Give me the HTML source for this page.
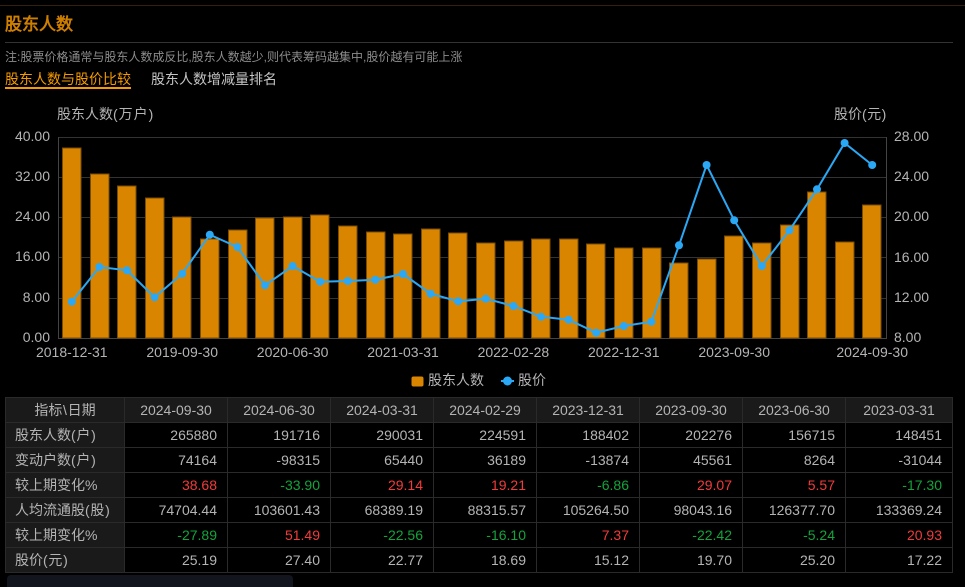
<!DOCTYPE html>
<html><head><meta charset="utf-8">
<style>
html,body{margin:0;padding:0;background:#000;}
#r{position:relative;width:965px;height:587px;overflow:hidden;background:#000;font-family:"Liberation Sans","WenQuanYi Zen Hei",sans-serif;color:#b4b4b4;}
.a{position:absolute;white-space:nowrap;}
svg{position:absolute;left:0;top:0;}
svg text{font-family:"Liberation Sans","WenQuanYi Zen Hei",sans-serif;}
table{position:absolute;left:5px;top:397px;border-collapse:collapse;table-layout:fixed;width:947px;font-size:14px;}
td{border:1px solid #2a2a2a;height:24px;padding:0 10px 0 0;text-align:right;box-sizing:border-box;color:#b4b4b4;line-height:24px;white-space:nowrap;}
tr{height:25px;}
tr:first-child td{background:#1a1a1a;text-align:center;padding:0;}
td:first-child{background:#1a1a1a;text-align:left;padding-left:9px;}
tr:first-child td:first-child{text-align:center;padding:0;}
.u{color:#f23b3b}.d{color:#14a33c}
.p{letter-spacing:.7px}
</style></head><body>
<div id="r">
<div class="a" style="left:0;top:5px;width:965px;height:1px;background:#33210d"></div>
<div class="a" style="left:5px;top:15px;font-size:17px;font-weight:bold;color:#cf7f00;line-height:20px">股东人数</div>
<div class="a" style="left:5px;top:42px;width:948px;height:1px;background:#333"></div>
<div class="a" style="left:5px;top:49px;font-size:12px;color:#8c8c8c;line-height:16px">注:股票价格通常与股东人数成反比,股东人数越少,则代表筹码越集中,股价越有可能上涨</div>
<div class="a" style="left:5px;top:70px;font-size:14px;color:#f59a00;line-height:18px">股东人数与股价比较</div>
<div class="a" style="left:5px;top:87px;width:126px;height:2px;background:#f59a00"></div>
<div class="a" style="left:151px;top:70px;font-size:14px;color:#c4c4c4;line-height:18px">股东人数增减量排名</div>

<svg id="c" width="965" height="395" viewBox="0 0 965 395">
<g stroke="#333" stroke-width="1" shape-rendering="crispEdges">
<line x1="58" y1="137.5" x2="887" y2="137.5"/>
<line x1="58" y1="177.5" x2="887" y2="177.5"/>
<line x1="58" y1="217.5" x2="887" y2="217.5"/>
<line x1="58" y1="257.5" x2="887" y2="257.5"/>
<line x1="58" y1="298.5" x2="887" y2="298.5"/>
<line x1="58" y1="338.5" x2="887" y2="338.5" stroke="#444"/>
<line x1="58.5" y1="137" x2="58.5" y2="339" stroke="#444"/>
<line x1="886.5" y1="137" x2="886.5" y2="339" stroke="#444"/>
</g>
<g fill="#d98500" stroke="#7a4c06" stroke-width="1" shape-rendering="crispEdges">
<rect x="62.5" y="148" width="18.5" height="190"/>
<rect x="90.5" y="174" width="18.5" height="164"/>
<rect x="117.5" y="186" width="18.5" height="152"/>
<rect x="145.5" y="198" width="18.5" height="140"/>
<rect x="172.5" y="217" width="18.5" height="121"/>
<rect x="200.5" y="239" width="18.5" height="99"/>
<rect x="228.5" y="230" width="18.5" height="108"/>
<rect x="255.5" y="218" width="18.5" height="120"/>
<rect x="283.5" y="217" width="18.5" height="121"/>
<rect x="310.5" y="215" width="18.5" height="123"/>
<rect x="338.5" y="226" width="18.5" height="112"/>
<rect x="366.5" y="232" width="18.5" height="106"/>
<rect x="393.5" y="234" width="18.5" height="104"/>
<rect x="421.5" y="229" width="18.5" height="109"/>
<rect x="448.5" y="233" width="18.5" height="105"/>
<rect x="476.5" y="243" width="18.5" height="95"/>
<rect x="504.5" y="241" width="18.5" height="97"/>
<rect x="531.5" y="239" width="18.5" height="99"/>
<rect x="559.5" y="239" width="18.5" height="99"/>
<rect x="586.5" y="244" width="18.5" height="94"/>
<rect x="614.5" y="248" width="18.5" height="90"/>
<rect x="642.5" y="248" width="18.5" height="90"/>
<rect x="669.5" y="263" width="18.5" height="75"/>
<rect x="697.5" y="259" width="18.5" height="79"/>
<rect x="724.5" y="236" width="18.5" height="102"/>
<rect x="752.5" y="243" width="18.5" height="95"/>
<rect x="780.5" y="225" width="18.5" height="113"/>
<rect x="807.5" y="192" width="18.5" height="146"/>
<rect x="835.5" y="242" width="18.5" height="96"/>
<rect x="862.5" y="205" width="18.5" height="133"/>
</g>
<polyline fill="none" stroke="#2ba8f5" stroke-width="2" points="71.8,301.7 99.4,267 127,270.3 154.6,297.3 182.2,273.7 209.8,234.7 237.4,247 265,285.3 292.6,266 320.2,281.7 347.8,281 375.4,279.7 403,274 430.6,293.7 458.2,301.3 485.8,298.7 513.4,306 541,316.7 568.6,319.7 596.2,332.7 623.8,326 651.4,321.7 679,245.3 706.6,165 734.2,220.3 761.8,266 789.4,230.3 817,189.3 844.6,143 872.2,165"/>
<g fill="#2ba8f5">
<circle cx="71.8" cy="301.7" r="4"/><circle cx="99.4" cy="267" r="4"/><circle cx="127" cy="270.3" r="4"/><circle cx="154.6" cy="297.3" r="4"/><circle cx="182.2" cy="273.7" r="4"/><circle cx="209.8" cy="234.7" r="4"/><circle cx="237.4" cy="247" r="4"/><circle cx="265" cy="285.3" r="4"/><circle cx="292.6" cy="266" r="4"/><circle cx="320.2" cy="281.7" r="4"/><circle cx="347.8" cy="281" r="4"/><circle cx="375.4" cy="279.7" r="4"/><circle cx="403" cy="274" r="4"/><circle cx="430.6" cy="293.7" r="4"/><circle cx="458.2" cy="301.3" r="4"/><circle cx="485.8" cy="298.7" r="4"/><circle cx="513.4" cy="306" r="4"/><circle cx="541" cy="316.7" r="4"/><circle cx="568.6" cy="319.7" r="4"/><circle cx="596.2" cy="332.7" r="4"/><circle cx="623.8" cy="326" r="4"/><circle cx="651.4" cy="321.7" r="4"/><circle cx="679" cy="245.3" r="4"/><circle cx="706.6" cy="165" r="4"/><circle cx="734.2" cy="220.3" r="4"/><circle cx="761.8" cy="266" r="4"/><circle cx="789.4" cy="230.3" r="4"/><circle cx="817" cy="189.3" r="4"/><circle cx="844.6" cy="143" r="4"/><circle cx="872.2" cy="165" r="4"/>
</g>
<g font-size="14" fill="#b4b4b4">
<text x="57" y="119">股东人数<tspan letter-spacing="1">(万户</tspan>)</text>
<text x="834" y="119">股价<tspan letter-spacing=".5">(元</tspan>)</text>
<g text-anchor="end">
<text x="50" y="141">40.00</text><text x="50" y="181">32.00</text><text x="50" y="221">24.00</text><text x="50" y="261">16.00</text><text x="50" y="302">8.00</text><text x="50" y="342">0.00</text>
</g>
<g text-anchor="start">
<text x="894" y="141">28.00</text><text x="894" y="181">24.00</text><text x="894" y="221">20.00</text><text x="894" y="262">16.00</text><text x="894" y="302">12.00</text><text x="894" y="342">8.00</text>
</g>
<g text-anchor="middle">
<text x="71.8" y="357">2018-12-31</text><text x="182.2" y="357">2019-09-30</text><text x="292.6" y="357">2020-06-30</text><text x="403" y="357">2021-03-31</text><text x="513.4" y="357">2022-02-28</text><text x="623.8" y="357">2022-12-31</text><text x="734.2" y="357">2023-09-30</text><text x="872.2" y="357">2024-09-30</text>
</g>
</g>
<rect x="411.5" y="376.5" width="12" height="10" rx="2" fill="#d98500"/>
<text x="428" y="385" font-size="14" fill="#b4b4b4">股东人数</text>
<line x1="501" y1="381" x2="514" y2="381" stroke="#2ba8f5" stroke-width="2"/>
<circle cx="507.5" cy="381" r="4.5" fill="#2ba8f5"/>
<text x="518" y="385" font-size="14" fill="#b4b4b4">股价</text>
</svg>

<table>
<colgroup><col style="width:119px"><col style="width:103px"><col style="width:103px"><col style="width:103px"><col style="width:103px"><col style="width:103px"><col style="width:103px"><col style="width:103px"><col style="width:107px"></colgroup>
<tr><td>指标<span style="margin:0 .7px">\</span>日期</td><td>2024-09-30</td><td>2024-06-30</td><td>2024-03-31</td><td>2024-02-29</td><td>2023-12-31</td><td>2023-09-30</td><td>2023-06-30</td><td>2023-03-31</td></tr>
<tr><td>股东人数<span class="p">(户</span>)</td><td>265880</td><td>191716</td><td>290031</td><td>224591</td><td>188402</td><td>202276</td><td>156715</td><td>148451</td></tr>
<tr><td>变动户数<span class="p">(户</span>)</td><td>74164</td><td>-98315</td><td>65440</td><td>36189</td><td>-13874</td><td>45561</td><td>8264</td><td>-31044</td></tr>
<tr><td>较上期变化%</td><td class="u">38.68</td><td class="d">-33.90</td><td class="u">29.14</td><td class="u">19.21</td><td class="d">-6.86</td><td class="u">29.07</td><td class="u">5.57</td><td class="d">-17.30</td></tr>
<tr><td>人均流通股<span class="p">(股</span>)</td><td>74704.44</td><td>103601.43</td><td>68389.19</td><td>88315.57</td><td>105264.50</td><td>98043.16</td><td>126377.70</td><td>133369.24</td></tr>
<tr><td>较上期变化%</td><td class="d">-27.89</td><td class="u">51.49</td><td class="d">-22.56</td><td class="d">-16.10</td><td class="u">7.37</td><td class="d">-22.42</td><td class="d">-5.24</td><td class="u">20.93</td></tr>
<tr><td>股价<span class="p">(元</span>)</td><td>25.19</td><td>27.40</td><td>22.77</td><td>18.69</td><td>15.12</td><td>19.70</td><td>25.20</td><td>17.22</td></tr>
</table>
<div class="a" style="left:7px;top:575px;width:286px;height:12px;background:#12151d;border-radius:4px 4px 0 0"></div>
</div>
</body></html>
